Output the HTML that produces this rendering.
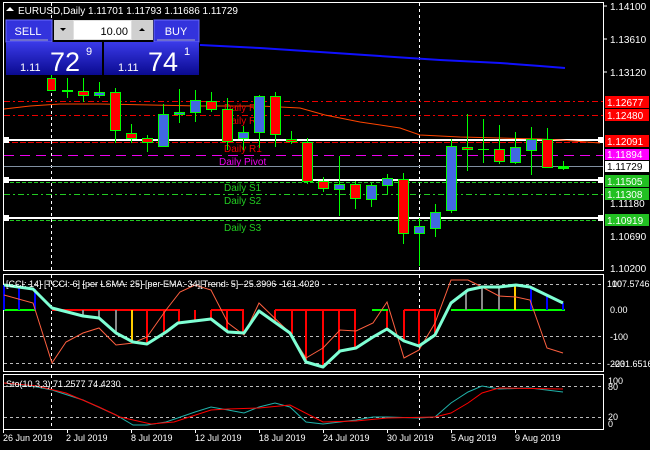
<!DOCTYPE html>
<html><head><meta charset="utf-8"><style>
body{margin:0;background:#000;width:650px;height:450px;overflow:hidden;font-family:"Liberation Sans",sans-serif}
svg text{font-family:"Liberation Sans",sans-serif}
</style></head><body>
<svg width="650" height="450" xmlns="http://www.w3.org/2000/svg" style="position:absolute;left:0;top:0">
<rect width="650" height="450" fill="#000"/>
<!-- borders -->
<rect x="3.5" y="2.5" width="600" height="268" fill="none" stroke="#fff"/>
<rect x="3.5" y="274.5" width="600" height="97" fill="none" stroke="#fff"/>
<rect x="3.5" y="374.5" width="600" height="55" fill="none" stroke="#fff"/>
<!-- vertical dashed -->
<g stroke="#fff" stroke-dasharray="3,3">
<line x1="51.5" y1="3" x2="51.5" y2="270"/><line x1="419.5" y1="3" x2="419.5" y2="270"/>
<line x1="51.5" y1="275" x2="51.5" y2="371"/><line x1="419.5" y1="275" x2="419.5" y2="371"/>
<line x1="51.5" y1="375" x2="51.5" y2="429"/><line x1="419.5" y1="375" x2="419.5" y2="429"/>
</g>
<!-- level lines -->
<line x1="4" y1="101.5" x2="603" y2="101.5" stroke="#e00" stroke-dasharray="6,3,2,3"/>
<line x1="4" y1="115.5" x2="603" y2="115.5" stroke="#e00" stroke-dasharray="6,3,2,3"/>
<rect x="4" y="139" width="599" height="2" fill="#fff"/>
<line x1="4" y1="142.5" x2="603" y2="142.5" stroke="#e00" stroke-dasharray="6,2"/>
<line x1="4" y1="155.5" x2="603" y2="155.5" stroke="#e0e" stroke-dasharray="10,6"/>
<line x1="4" y1="166.5" x2="603" y2="166.5" stroke="#8090a0"/>
<rect x="4" y="179" width="599" height="2" fill="#fff"/>
<line x1="4" y1="182.5" x2="603" y2="182.5" stroke="#2c2" stroke-dasharray="4,2"/>
<line x1="4" y1="194.5" x2="603" y2="194.5" stroke="#2c2" stroke-dasharray="6,3,2,3"/>
<rect x="4" y="217" width="599" height="2" fill="#fff"/>
<line x1="4" y1="220.5" x2="603" y2="220.5" stroke="#2c2" stroke-dasharray="4,2"/>
<g fill="#fff"><rect x="3" y="137" width="6" height="6"/><rect x="3" y="177" width="6" height="6"/><rect x="3" y="215" width="6" height="6"/>
<rect x="598" y="137" width="6" height="6"/><rect x="598" y="177" width="6" height="6"/><rect x="598" y="215" width="6" height="6"/></g>
<!-- MAs -->
<polyline fill="none" stroke="#ff4500" stroke-width="1" points="4,109 30,106 60,104 100,104 150,105 200,106 260,106 300,108 325,115 360,122 400,128 420,135 460,137 500,138 540,139 560,140 600,143"/>
<polyline fill="none" stroke="#1010ff" stroke-width="2" points="200,45 260,48 320,52 380,56 440,60 500,63 540,66 565,68"/>
<!-- level text -->
<g font-size="10">
<text x="224" y="111" fill="#e00">Daily R</text><text x="224" y="124" fill="#e00">Daily R</text>
<text x="224" y="152" fill="#e00">Daily R1</text>
<text x="219" y="165" fill="#e0e">Daily Pivot</text>
<text x="224" y="191" fill="#2c2">Daily S1</text><text x="224" y="204" fill="#2c2">Daily S2</text><text x="224" y="231" fill="#2c2">Daily S3</text>
</g>
<!-- candles -->
<g stroke="#00ff00" stroke-width="1">
<line x1="51.5" y1="72" x2="51.5" y2="90"/><rect x="47.5" y="78.5" width="8" height="12" fill="#f00"/>
<line x1="67.5" y1="78" x2="67.5" y2="98"/><rect x="62.5" y="90.5" width="10" height="1" fill="#0f0"/>
<line x1="83.5" y1="78" x2="83.5" y2="102"/><rect x="78.5" y="91.5" width="10" height="4" fill="#f00"/>
<line x1="99.5" y1="82" x2="99.5" y2="98"/><rect x="94.5" y="92.5" width="10" height="3" fill="#4169e1"/>
<line x1="115.5" y1="88" x2="115.5" y2="143"/><rect x="110.5" y="92.5" width="10" height="38" fill="#f00"/>
<line x1="131.5" y1="124" x2="131.5" y2="143"/><rect x="126.5" y="133.5" width="10" height="5" fill="#f00"/>
<line x1="147.5" y1="135" x2="147.5" y2="152"/><rect x="142.5" y="138.5" width="10" height="4" fill="#f00"/>
<line x1="163.5" y1="104" x2="163.5" y2="147"/><rect x="158.5" y="114.5" width="10" height="32" fill="#4169e1"/>
<line x1="179.5" y1="89" x2="179.5" y2="123"/><rect x="174.5" y="112.5" width="10" height="2" fill="#4169e1"/>
<line x1="195.5" y1="90" x2="195.5" y2="122"/><rect x="190.5" y="100.5" width="10" height="12" fill="#4169e1"/>
<line x1="211.5" y1="92" x2="211.5" y2="112"/><rect x="206.5" y="101.5" width="10" height="8" fill="#f00"/>
<line x1="227.5" y1="98" x2="227.5" y2="150"/><rect x="222.5" y="109.5" width="10" height="32" fill="#f00"/>
<line x1="243.5" y1="126" x2="243.5" y2="150"/><rect x="238.5" y="132.5" width="10" height="6" fill="#4169e1"/>
<line x1="259.5" y1="95" x2="259.5" y2="148"/><rect x="254.5" y="96.5" width="10" height="36" fill="#4169e1"/>
<line x1="275.5" y1="92" x2="275.5" y2="147"/><rect x="270.5" y="96.5" width="10" height="38" fill="#f00"/>
<line x1="291.5" y1="131" x2="291.5" y2="144"/><rect x="286.5" y="139.5" width="10" height="2" fill="#f00"/>
<line x1="307.5" y1="138" x2="307.5" y2="184"/><rect x="302.5" y="142.5" width="10" height="39" fill="#f00"/>
<line x1="323.5" y1="177" x2="323.5" y2="192"/><rect x="318.5" y="181.5" width="10" height="7" fill="#f00"/>
<line x1="339.5" y1="156" x2="339.5" y2="216"/><rect x="334.5" y="184.5" width="10" height="5" fill="#4169e1"/>
<line x1="355.5" y1="181" x2="355.5" y2="209"/><rect x="350.5" y="184.5" width="10" height="14" fill="#f00"/>
<line x1="371.5" y1="183" x2="371.5" y2="207"/><rect x="366.5" y="185.5" width="10" height="14" fill="#4169e1"/>
<line x1="387.5" y1="174" x2="387.5" y2="194"/><rect x="382.5" y="178.5" width="10" height="7" fill="#4169e1"/>
<line x1="403.5" y1="173" x2="403.5" y2="244"/><rect x="398.5" y="179.5" width="10" height="54" fill="#f00"/>
<line x1="419.5" y1="218" x2="419.5" y2="266"/><rect x="414.5" y="226.5" width="10" height="7" fill="#4169e1"/>
<line x1="435.5" y1="204" x2="435.5" y2="237"/><rect x="430.5" y="212.5" width="10" height="16" fill="#4169e1"/>
<line x1="451.5" y1="139" x2="451.5" y2="213"/><rect x="446.5" y="146.5" width="10" height="64" fill="#4169e1"/>
<line x1="467.5" y1="114" x2="467.5" y2="171"/><rect x="462.5" y="147.5" width="10" height="2" fill="#f00"/>
<line x1="483.5" y1="119" x2="483.5" y2="163"/><line x1="478" y1="149.5" x2="489" y2="149.5"/>
<line x1="499.5" y1="125" x2="499.5" y2="164"/><rect x="494.5" y="149.5" width="10" height="12" fill="#f00"/>
<line x1="515.5" y1="132" x2="515.5" y2="164"/><rect x="510.5" y="147.5" width="10" height="15" fill="#4169e1"/>
<line x1="531.5" y1="127" x2="531.5" y2="175"/><rect x="526.5" y="139.5" width="10" height="11" fill="#4169e1"/>
<line x1="547.5" y1="128" x2="547.5" y2="168"/><rect x="542.5" y="139.5" width="10" height="28" fill="#f00"/>
<line x1="563.5" y1="161" x2="563.5" y2="170"/><rect x="558.5" y="166.5" width="10" height="2" fill="#0f0"/>
</g>
<!-- right price axis -->
<g font-size="10" fill="#fff">
<line x1="604" y1="6" x2="607" y2="6" stroke="#fff"/><text x="610" y="10">1.14100</text>
<line x1="604" y1="39" x2="607" y2="39" stroke="#fff"/><text x="610" y="43">1.13610</text>
<line x1="604" y1="72" x2="607" y2="72" stroke="#fff"/><text x="610" y="76">1.13120</text>
<text x="610" y="207">1.11180</text><text x="610" y="240">1.10690</text><text x="610" y="272">1.10200</text>
</g>
<g font-size="10">
<rect x="605" y="96" width="44" height="12" fill="#f00"/><text x="607" y="106" fill="#fff">1.12677</text>
<rect x="605" y="109" width="44" height="12" fill="#f00"/><text x="607" y="119" fill="#fff">1.12480</text>
<rect x="605" y="135" width="44" height="12" fill="#f00"/><text x="607" y="145" fill="#fff">1.12091</text>
<rect x="605" y="149" width="44" height="11" fill="#f0f"/><text x="607" y="158" fill="#fff">1.11894</text>
<rect x="605" y="161" width="44" height="11" fill="#fff"/><text x="607" y="170" fill="#000">1.11729</text>
<rect x="605" y="175" width="44" height="12" fill="#22c022"/><text x="607" y="185" fill="#fff">1.11505</text>
<rect x="605" y="188" width="44" height="12" fill="#22c022"/><text x="607" y="198" fill="#fff">1.11308</text>
<rect x="605" y="214" width="44" height="12" fill="#22c022"/><text x="607" y="224" fill="#fff">1.10919</text>
</g>
<!-- title -->
<polygon points="6,11 10,7 14,11" fill="#fff"/>
<text x="18" y="14" font-size="10" fill="#fff">EURUSD,Daily  1.11701 1.11793 1.11686 1.11729</text>
<!-- trade panel -->
<defs><linearGradient id="bg" x1="0" y1="0" x2="0" y2="1"><stop offset="0" stop-color="#3a3ae8"/><stop offset="1" stop-color="#0a0a90"/></linearGradient></defs>
<rect x="6" y="20" width="46" height="22" fill="#3333dd" stroke="#6a6aff"/>
<line x1="10" y1="40" x2="48" y2="40" stroke="#aab"/>
<text x="28" y="35" font-size="11" fill="#fff" text-anchor="middle">SELL</text>
<rect x="54" y="20" width="99" height="20" fill="#e0e0e0"/>
<rect x="54" y="20" width="19" height="20" fill="#d0d0d0"/><polygon points="60,28 66,28 63,31" fill="#000"/>
<rect x="74" y="21" width="57" height="18" fill="#fff"/>
<text x="128" y="35" font-size="11" fill="#000" text-anchor="end">10.00</text>
<rect x="132" y="20" width="21" height="20" fill="#d0d0d0"/><polygon points="139,31 145,31 142,28" fill="#000"/>
<rect x="154" y="20" width="45" height="22" fill="#3333dd" stroke="#6a6aff"/>
<line x1="157" y1="40" x2="195" y2="40" stroke="#aab"/>
<text x="176" y="35" font-size="11" fill="#fff" text-anchor="middle">BUY</text>
<rect x="6" y="42" width="96" height="33" fill="url(#bg)"/>
<rect x="104" y="42" width="95" height="33" fill="url(#bg)"/>
<text x="20" y="71" font-size="11" fill="#fff">1.11</text>
<text x="50" y="71" font-size="27" fill="#fff">72</text>
<text x="86" y="55" font-size="11" fill="#fff">9</text>
<text x="118" y="71" font-size="11" fill="#fff">1.11</text>
<text x="148" y="71" font-size="27" fill="#fff">74</text>
<text x="184" y="55" font-size="11" fill="#fff">1</text>
<!-- CCI panel -->
<line x1="4" y1="284.5" x2="603" y2="284.5" stroke="#bbb" stroke-dasharray="3,3"/>
<line x1="4" y1="336.5" x2="603" y2="336.5" stroke="#bbb" stroke-dasharray="3,3"/>
<line x1="4" y1="363.5" x2="603" y2="363.5" stroke="#bbb" stroke-dasharray="3,3"/>
<g stroke="#f00" stroke-width="2">
<line x1="52" y1="310" x2="180" y2="310"/><line x1="211" y1="310" x2="244" y2="310"/><line x1="275" y1="310" x2="356" y2="310"/><line x1="404" y1="310" x2="436" y2="310"/>
<line x1="147" y1="310" x2="147" y2="344"/><line x1="164" y1="310" x2="164" y2="333"/><line x1="179" y1="310" x2="179" y2="323"/><line x1="195" y1="310" x2="195" y2="320"/><line x1="211" y1="310" x2="211" y2="319"/><line x1="227" y1="310" x2="227" y2="331"/><line x1="243" y1="310" x2="243" y2="333"/><line x1="275" y1="310" x2="275" y2="322"/><line x1="292" y1="310" x2="292" y2="334"/><line x1="306" y1="310" x2="306" y2="360"/><line x1="323" y1="310" x2="323" y2="366"/><line x1="339" y1="310" x2="339" y2="351"/><line x1="355" y1="310" x2="355" y2="348"/><line x1="387" y1="310" x2="387" y2="329"/><line x1="404" y1="310" x2="404" y2="341"/><line x1="419" y1="310" x2="419" y2="346"/><line x1="435" y1="310" x2="435" y2="335"/>
</g>
<g stroke-width="2">
<line x1="4" y1="310" x2="35" y2="310" stroke="#0f0"/><line x1="372" y1="310" x2="388" y2="310" stroke="#0f0"/><line x1="451" y1="310" x2="565" y2="310" stroke="#0f0"/>
<line x1="4" y1="310" x2="4" y2="285" stroke="#00f"/><line x1="19" y1="310" x2="19" y2="287" stroke="#00f"/><line x1="35" y1="310" x2="35" y2="289" stroke="#00f"/>
<line x1="83" y1="310" x2="83" y2="316" stroke="#888"/><line x1="99" y1="310" x2="99" y2="318" stroke="#888"/><line x1="116" y1="310" x2="116" y2="333" stroke="#888"/><line x1="132" y1="310" x2="132" y2="342" stroke="#fc0"/>
<line x1="466" y1="310" x2="466" y2="290" stroke="#888"/><line x1="482" y1="310" x2="482" y2="287" stroke="#888"/><line x1="499" y1="310" x2="499" y2="287" stroke="#888"/><line x1="515" y1="310" x2="515" y2="285" stroke="#fc0"/><line x1="531" y1="310" x2="531" y2="287" stroke="#00f"/><line x1="547" y1="310" x2="547" y2="295" stroke="#00f"/><line x1="563" y1="310" x2="563" y2="303" stroke="#00f"/>
</g>
<polyline fill="none" stroke="#ff6040" stroke-width="1" points="4,295 33,303 52,363 66,342 83,333 99,328 116,345 133,343 147,337 166,310 180,292 195,285 211,290 228,323 244,335 259,303 290,333 306,358 323,348 340,330 356,331 373,323 387,302 404,358 419,350 435,323 451,280 468,280 482,287 499,296 516,297 530,300 547,348 563,353"/>
<polyline fill="none" stroke="#7fffd4" stroke-width="3" stroke-linejoin="round" points="4,285 33,289 52,308 83,316 99,318 116,333 133,342 147,344 166,332 178,323 211,319 228,332 244,333 259,311 290,333 306,362 323,367 340,351 356,348 373,337 387,329 404,341 419,346 435,335 451,303 468,290 482,287 499,287 516,285 530,287 563,303"/>
<text x="6" y="287" font-size="9" fill="#fff">[CCI: 14] [TCCI: 6] [per LSMA: 25] [per EMA: 34][Trend: 5] -25.3906 -161.4020</text>
<g font-size="9" fill="#fff">
<text x="607" y="287">100</text><text x="612" y="287">107.5746</text>
<text x="610" y="313">0.00</text><text x="610" y="340">-100</text>
<text x="607" y="367">-200</text><text x="612" y="367">-231.6516</text>
</g>
<!-- Sto panel -->
<line x1="4" y1="386.5" x2="603" y2="386.5" stroke="#bbb" stroke-dasharray="3,3"/>
<line x1="4" y1="417.5" x2="603" y2="417.5" stroke="#bbb" stroke-dasharray="3,3"/>
<polyline fill="none" stroke="#20b2aa" points="4,383 37,387 52,390 83,400 116,415 133,425 147,425 166,422 195,412 211,407 228,410 244,413 259,407 275,403 290,407 306,422 323,424 340,422 356,420 373,417 387,417 419,418 435,417 451,403 468,392 482,386 499,389 530,388 563,392"/>
<polyline fill="none" stroke="#f00" points="4,383 37,386 66,393 99,407 120,417 151,424 174,422 211,410 228,409 259,408 290,405 323,422 356,421 387,418 435,417 451,413 468,403 482,393 499,388 563,389"/>
<text x="6" y="387" font-size="9" fill="#fff">Sto(10,3,3) 71.2577 74.4230</text>
<g font-size="9" fill="#fff">
<text x="608" y="384">100</text><text x="608" y="390">80</text><text x="608" y="420">20</text><text x="608" y="427">0</text>
</g>
<!-- date axis -->
<g font-size="9" fill="#fff">
<text x="3" y="441">26 Jun 2019</text><text x="66" y="441">2 Jul 2019</text><text x="131" y="441">8 Jul 2019</text>
<text x="195" y="441">12 Jul 2019</text><text x="259" y="441">18 Jul 2019</text><text x="323" y="441">24 Jul 2019</text>
<text x="387" y="441">30 Jul 2019</text><text x="451" y="441">5 Aug 2019</text><text x="515" y="441">9 Aug 2019</text>
</g>
<g stroke="#fff"><line x1="3.5" y1="430" x2="3.5" y2="433"/><line x1="67.5" y1="430" x2="67.5" y2="433"/><line x1="131.5" y1="430" x2="131.5" y2="433"/><line x1="195.5" y1="430" x2="195.5" y2="433"/><line x1="259.5" y1="430" x2="259.5" y2="433"/><line x1="323.5" y1="430" x2="323.5" y2="433"/><line x1="387.5" y1="430" x2="387.5" y2="433"/><line x1="451.5" y1="430" x2="451.5" y2="433"/><line x1="515.5" y1="430" x2="515.5" y2="433"/></g>
</svg>
</body></html>
